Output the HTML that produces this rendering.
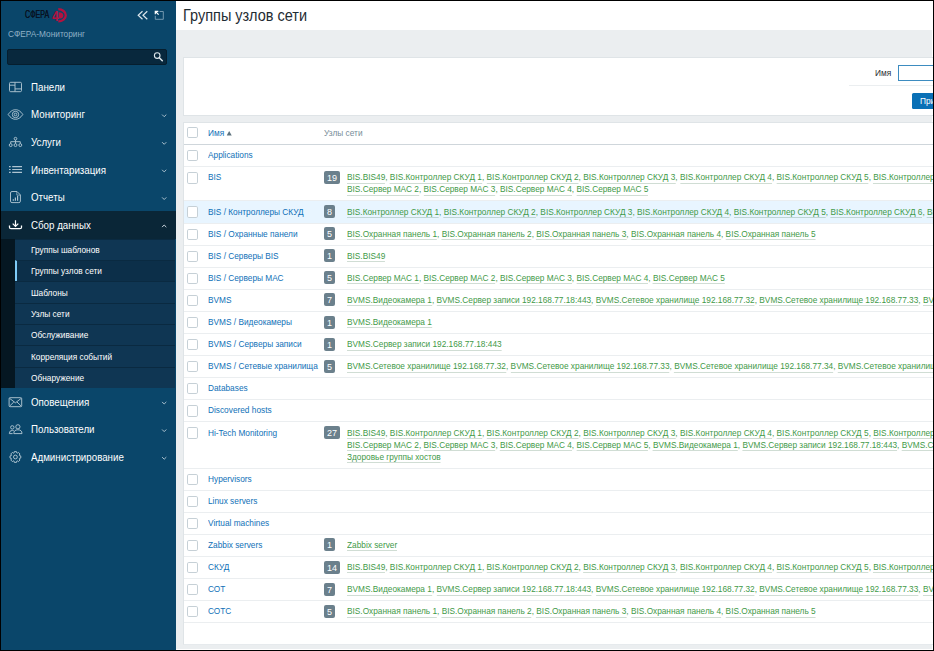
<!DOCTYPE html>
<html lang="ru"><head><meta charset="utf-8"><title>Группы узлов сети</title>
<style>
*{box-sizing:border-box;margin:0;padding:0}
html,body{width:934px;height:651px;overflow:hidden;background:#000;font-family:"Liberation Sans",sans-serif;font-size:8.3px;color:#1f2c33}
#wrap{position:absolute;left:1px;top:1px;width:931.6px;height:648.8px;background:#fff;overflow:hidden}
#bg{position:absolute;left:0;top:0;width:930.8px;height:648.2px;background:#ebeef0}
#side{position:absolute;left:0;top:0;width:174.5px;height:649px;background:#0a466a}
#main{position:absolute;left:174.5px;top:0;right:0;height:649px}
#hdr{position:absolute;left:0;top:0;right:0;height:28.7px;background:#fff}
#hdr h1{transform:scaleX(.926);transform-origin:0 50%;position:absolute;left:7.5px;top:5.5px;font-size:15.66px;line-height:17px;font-weight:normal;color:#1f2c33;white-space:nowrap}
#filter{position:absolute;left:7.5px;top:56.2px;right:0;height:59px;background:#fff;border:1px solid #dfe4e7;border-right:0}
#tbl{position:absolute;left:7.3px;top:121.4px;right:0;height:522.2px;background:#fff;border:1px solid #dfe4e7;border-right:0;border-bottom-color:#e6eaed;overflow:hidden}
.row{position:absolute;left:0;right:0;border-bottom:1px solid #ebeef0}
.row.hd{border-bottom:1px solid #cfd6db;color:#768d99}
.row.hl{background:#e8f5ff}
.cb{position:absolute;left:2.8px;width:11px;height:11.2px;border:1px solid #c6d0d6;border-radius:1.8px;background:#fff}
.nm{transform:scaleX(.926);transform-origin:0 50%;font-size:8.96px;position:absolute;left:23.8px;white-space:nowrap;color:#0f70b7;line-height:12px}
.bd{position:absolute;left:140.2px;height:13px;padding:0 3.05px;border-radius:2px;background:#6b808c;color:#fff;font-size:9px;line-height:14.4px;text-align:center}
.hs{transform:scaleX(.926);transform-origin:0 50%;font-size:8.96px;position:absolute;left:163.5px;white-space:nowrap;color:#4f9a4f;line-height:12px}
a.g{color:#3f9a48;text-decoration:none;border-bottom:1px solid rgba(80,130,95,.27);padding-bottom:.4px}
.sidetx{position:absolute;white-space:nowrap}
.mi{position:absolute;left:0;width:174.5px;height:27.6px;color:#fff;font-size:9.75px}
.mi span{transform:scaleX(.926);transform-origin:0 50%;font-size:10.53px;position:absolute;left:30.4px;top:.6px;line-height:27.6px;white-space:nowrap}
.mi svg.ic{position:absolute;left:7px;top:7.5px;width:13px;height:13px}
.mi svg.ar{position:absolute;left:160px;top:11.5px;width:6px;height:5px}
.sub{position:absolute;left:14.3px;width:160.2px;height:21.33px;background:#0f3653;border-top:1px solid #0a2a41;color:#fff;font-size:8.3px}
.sub span{transform:scaleX(.926);transform-origin:0 50%;font-size:8.96px;position:absolute;left:16.2px;top:.2px;line-height:20.6px;white-space:nowrap}
.sub.sel{background:#0c2f49;border-left:2.5px solid #7ecbf7}
.sub.sel span{left:13.9px}
</style></head><body><div id="wrap"><div id="bg"></div>

<div id="side">
<div class="sidetx" style="left:23.8px;top:8.4px;font-size:10.4px;line-height:12px;color:#071222;text-shadow:0 0 .2px #071222;transform:scaleX(.685);transform-origin:0 50%">СФЕРА</div>
<div class="sidetx" style="left:50.6px;top:5.6px;font-size:15.5px;line-height:18px;font-weight:bold;color:#b3123f;transform:scaleX(.76);transform-origin:0 50%">4</div>
<div class="sidetx" style="left:7.2px;top:26.8px;font-size:8.96px;line-height:12px;color:#8fb0c6;transform:scaleX(.926);transform-origin:0 50%;">СФЕРА-Мониторинг</div>
<div style="position:absolute;left:6.3px;top:48px;width:160.2px;height:15.8px;background:#08283d;border:1px solid #061e2e;border-radius:2px"></div>
<div class="mi" style="top:72.20px"><span>Панели</span></div>
<div class="mi" style="top:99.80px"><span>Мониторинг</span></div>
<div class="mi" style="top:127.40px"><span>Услуги</span></div>
<div class="mi" style="top:155.00px"><span>Инвентаризация</span></div>
<div class="mi" style="top:182.60px"><span>Отчеты</span></div>
<div class="mi" style="top:210.20px;background:#0a2637"><span>Сбор данных</span></div>
<div style="position:absolute;left:0;top:237.80px;width:14.3px;height:149.31px;background:#051722"></div>
<div class="sub" style="top:237.80px"><span>Группы шаблонов</span></div>
<div class="sub sel" style="top:259.13px"><span>Группы узлов сети</span></div>
<div class="sub" style="top:280.46px"><span>Шаблоны</span></div>
<div class="sub" style="top:301.79px"><span>Узлы сети</span></div>
<div class="sub" style="top:323.12px"><span>Обслуживание</span></div>
<div class="sub" style="top:344.45px"><span>Корреляция событий</span></div>
<div class="sub" style="top:365.78px"><span>Обнаружение</span></div>
<div class="mi" style="top:387.11px"><span>Оповещения</span></div>
<div class="mi" style="top:414.71px"><span>Пользователи</span></div>
<div class="mi" style="top:442.31px"><span>Администрирование</span></div>
<svg style="position:absolute;left:-1px;top:-1px" width="176" height="651" viewBox="0 0 176 651"><path d="M58.3 9.2 A7.5 6.1 0 0 1 58.3 21.4" fill="none" stroke="#b3123f" stroke-width="2.3"/><path d="M58.6 12.2 A4.7 3.2 0 0 1 58.6 18.6 Z" fill="#b3123f"/><path d="M142.5 11.3 L138.2 15.3 L142.5 19.3 M147.3 11.3 L143 15.3 L147.3 19.3" fill="none" stroke="#dbe6ec" stroke-width="1.2"/><path d="M159.6 11.5 H163.3 V19.3 H155.3 V15.8" fill="none" stroke="#7fa1b7" stroke-width="0.9"/><path d="M155.3 14.2 V11.3 H158.3 M155.5 11.5 L158.6 14.6" fill="none" stroke="#fff" stroke-width="1.2"/><circle cx="157.2" cy="55.6" r="2.8" fill="none" stroke="#dfe8ee" stroke-width="1.1"/><path d="M159.3 57.8 L162.3 60.8" stroke="#dfe8ee" stroke-width="1.5" stroke-linecap="round"/><rect x="9.5" y="82.3" width="12" height="9.4" rx="1.2" fill="none" stroke="#aec4d1" stroke-width="0.95"/><path d="M15 82.3 V91.7 M9.5 85.2 H15 M15 88.9 H21.5" fill="none" stroke="#aec4d1" stroke-width="0.95"/><path d="M8.2 114.5 C10.6 110.9 13 109.7 15.5 109.7 C18 109.7 20.4 110.9 22.8 114.5 C20.4 118.1 18 119.3 15.5 119.3 C13 119.3 10.6 118.1 8.2 114.5 Z" fill="none" stroke="#aec4d1" stroke-width="0.95"/><circle cx="15.5" cy="114.5" r="3.2" fill="none" stroke="#aec4d1" stroke-width="0.95"/><circle cx="15.5" cy="114.5" r="1.3" fill="none" stroke="#aec4d1" stroke-width="0.95"/><circle cx="15.5" cy="138.7" r="1.35" fill="none" stroke="#aec4d1" stroke-width="0.95"/><path d="M15.5 140.1 V143.6 M10.7 143.6 V141.7 H20.3 V143.6" fill="none" stroke="#aec4d1" stroke-width="0.95"/><circle cx="10.7" cy="145.1" r="1.45" fill="none" stroke="#aec4d1" stroke-width="0.95"/><circle cx="15.5" cy="145.1" r="1.45" fill="none" stroke="#aec4d1" stroke-width="0.95"/><circle cx="20.3" cy="145.1" r="1.45" fill="none" stroke="#aec4d1" stroke-width="0.95"/><path d="M12.2 166.7 H22 M12.2 169.5 H22 M12.2 172.3 H22 M9 166.7 H10.7 M9 169.5 H10.7 M9 172.3 H10.7" fill="none" stroke="#aec4d1" stroke-width="1.2"/><path d="M10.5 193 Q10.5 191.5 12 191.5 H17 L20.4 194.9 V201.1 Q20.4 202.6 18.9 202.6 H12 Q10.5 202.6 10.5 201.1 Z" fill="none" stroke="#aec4d1" stroke-width="0.95"/><path d="M16.8 191.7 V195.1 H20.2" fill="none" stroke="#aec4d1" stroke-width="0.7"/><path d="M13.3 200.8 V199.3 M15.4 200.8 V197.6 M17.6 200.8 V195.8" fill="none" stroke="#aec4d1" stroke-width="1.2"/><path d="M15.5 220.2 V226.2 M12.7 223.6 L15.5 226.4 L18.3 223.6" fill="none" stroke="#fff" stroke-width="1.2"/><path d="M9.5 225.4 V227.2 Q9.5 228.7 11 228.7 H20 Q21.5 228.7 21.5 227.2 V225.4" fill="none" stroke="#fff" stroke-width="1.3"/><rect x="9.1" y="397.7" width="12.6" height="9" rx="1" fill="none" stroke="#aec4d1" stroke-width="0.95"/><path d="M9.5 398.3 L15.4 402.8 L21.3 398.3 M9.5 406.2 L13.8 402 M21.3 406.2 L17 402" fill="none" stroke="#aec4d1" stroke-width="0.95"/><circle cx="17.9" cy="426.8" r="2.1" fill="none" stroke="#aec4d1" stroke-width="0.95"/><path d="M13.8 433.6 Q13.8 429.8 17.9 429.8 Q22 429.8 22 433.6 Z" fill="none" stroke="#aec4d1" stroke-width="0.95"/><circle cx="12.3" cy="427.4" r="1.7" fill="none" stroke="#aec4d1" stroke-width="0.95"/><path d="M12.6 433.6 H9.3 Q9.3 430.4 12.3 430.4 Q13.2 430.4 13.9 430.8" fill="none" stroke="#aec4d1" stroke-width="0.95"/><path d="M20.79 455.91 L20.79 458.09 L19.48 458.35 L19.24 458.93 L19.98 460.04 L18.44 461.58 L17.33 460.84 L16.75 461.08 L16.49 462.39 L14.31 462.39 L14.05 461.08 L13.47 460.84 L12.36 461.58 L10.82 460.04 L11.56 458.93 L11.32 458.35 L10.01 458.09 L10.01 455.91 L11.32 455.65 L11.56 455.07 L10.82 453.96 L12.36 452.42 L13.47 453.16 L14.05 452.92 L14.31 451.61 L16.49 451.61 L16.75 452.92 L17.33 453.16 L18.44 452.42 L19.98 453.96 L19.24 455.07 L19.48 455.65 Z" fill="none" stroke="#aec4d1" stroke-width="0.95" stroke-linejoin="round"/><circle cx="15.4" cy="457.0" r="1.9" fill="none" stroke="#aec4d1" stroke-width="0.95"/><path d="M162.1 114.60 L164.2 116.70 L166.3 114.60" fill="none" stroke="#b4c8d4" stroke-width="0.95"/><path d="M162.1 142.20 L164.2 144.30 L166.3 142.20" fill="none" stroke="#b4c8d4" stroke-width="0.95"/><path d="M162.1 169.80 L164.2 171.90 L166.3 169.80" fill="none" stroke="#b4c8d4" stroke-width="0.95"/><path d="M162.1 197.40 L164.2 199.50 L166.3 197.40" fill="none" stroke="#b4c8d4" stroke-width="0.95"/><path d="M162.1 227.10 L164.2 225.00 L166.3 227.10" fill="none" stroke="#dbe6ec" stroke-width="0.95"/><path d="M162.1 401.91 L164.2 404.01 L166.3 401.91" fill="none" stroke="#b4c8d4" stroke-width="0.95"/><path d="M162.1 429.51 L164.2 431.61 L166.3 429.51" fill="none" stroke="#b4c8d4" stroke-width="0.95"/><path d="M162.1 457.11 L164.2 459.21 L166.3 457.11" fill="none" stroke="#b4c8d4" stroke-width="0.95"/></svg>
</div>
<div id="main"><div id="hdr"><h1>Группы узлов сети</h1></div>
<div id="filter">
<div style="transform:scaleX(.926);transform-origin:0 50%;font-size:8.96px;position:absolute;left:691px;top:8.8px;line-height:12px;color:#1f2c33">Имя</div>
<div style="position:absolute;left:713.6px;top:7.1px;width:60px;height:16.2px;border:1px solid #3d8cc0;background:#fff"></div>
<div style="position:absolute;left:665px;top:27px;right:0;height:1px;background:#ebeef0"></div>
<div style="position:absolute;left:727.8px;top:34.8px;width:60px;height:16.2px;background:#0a70b6;color:#fff;line-height:16.2px;padding-left:8.5px;border-radius:1.5px 0 0 1.5px"><span style="display:inline-block;font-size:8.96px;transform:scaleX(.926);transform-origin:0 50%;">Применить</span></div>
</div>
<div id="tbl">
<div class="row hd" style="top:0;height:21.9px"><div class="cb" style="top:3.6px"></div><div class="nm" style="top:3.6px">Имя <svg width="5.8" height="4.4" viewBox="0 0 5 4" style="vertical-align:0.3px"><path d="M0 4 L2.5 0 L5 4 Z" fill="#5e737e"/></svg></div><div style="transform:scaleX(.926);transform-origin:0 50%;font-size:8.96px;position:absolute;left:140.5px;top:3.6px;line-height:12px;white-space:nowrap">Узлы сети</div></div>
<div class="row" style="top:21.9px;height:22.1px"><div class="cb" style="top:5px"></div><div class="nm" style="top:4.1px">Applications</div></div>
<div class="row" style="top:44.0px;height:34.1px"><div class="cb" style="top:5px"></div><div class="nm" style="top:4.1px">BIS</div><div class="bd" style="top:3.6px">19</div><div class="hs" style="top:4.1px"><a class="g">BIS.BIS49</a>, <a class="g">BIS.Контроллер СКУД 1</a>, <a class="g">BIS.Контроллер СКУД 2</a>, <a class="g">BIS.Контроллер СКУД 3</a>, <a class="g">BIS.Контроллер СКУД 4</a>, <a class="g">BIS.Контроллер СКУД 5</a>, <a class="g">BIS.Контроллер СКУД 6</a>, <a class="g">BIS.Контроллер СКУД 7</a><br><a class="g">BIS.Сервер МАС 2</a>, <a class="g">BIS.Сервер МАС 3</a>, <a class="g">BIS.Сервер МАС 4</a>, <a class="g">BIS.Сервер МАС 5</a></div></div>
<div class="row hl" style="top:78.1px;height:22.1px"><div class="cb" style="top:5px"></div><div class="nm" style="top:4.1px">BIS / Контроллеры СКУД</div><div class="bd" style="top:3.6px">8</div><div class="hs" style="top:4.1px"><a class="g">BIS.Контроллер СКУД 1</a>, <a class="g">BIS.Контроллер СКУД 2</a>, <a class="g">BIS.Контроллер СКУД 3</a>, <a class="g">BIS.Контроллер СКУД 4</a>, <a class="g">BIS.Контроллер СКУД 5</a>, <a class="g">BIS.Контроллер СКУД 6</a>, <a class="g">BIS.Контроллер СКУД 7</a></div></div>
<div class="row" style="top:100.2px;height:22.1px"><div class="cb" style="top:5px"></div><div class="nm" style="top:4.1px">BIS / Охранные панели</div><div class="bd" style="top:3.6px">5</div><div class="hs" style="top:4.1px"><a class="g">BIS.Охранная панель 1</a>, <a class="g">BIS.Охранная панель 2</a>, <a class="g">BIS.Охранная панель 3</a>, <a class="g">BIS.Охранная панель 4</a>, <a class="g">BIS.Охранная панель 5</a></div></div>
<div class="row" style="top:122.3px;height:22.1px"><div class="cb" style="top:5px"></div><div class="nm" style="top:4.1px">BIS / Серверы BIS</div><div class="bd" style="top:3.6px">1</div><div class="hs" style="top:4.1px"><a class="g">BIS.BIS49</a></div></div>
<div class="row" style="top:144.4px;height:22.1px"><div class="cb" style="top:5px"></div><div class="nm" style="top:4.1px">BIS / Серверы МАС</div><div class="bd" style="top:3.6px">5</div><div class="hs" style="top:4.1px"><a class="g">BIS.Сервер МАС 1</a>, <a class="g">BIS.Сервер МАС 2</a>, <a class="g">BIS.Сервер МАС 3</a>, <a class="g">BIS.Сервер МАС 4</a>, <a class="g">BIS.Сервер МАС 5</a></div></div>
<div class="row" style="top:166.5px;height:22.1px"><div class="cb" style="top:5px"></div><div class="nm" style="top:4.1px">BVMS</div><div class="bd" style="top:3.6px">7</div><div class="hs" style="top:4.1px"><a class="g">BVMS.Видеокамера 1</a>, <a class="g">BVMS.Сервер записи 192.168.77.18:443</a>, <a class="g">BVMS.Сетевое хранилище 192.168.77.32</a>, <a class="g">BVMS.Сетевое хранилище 192.168.77.33</a>, <a class="g">BVMS.Сетевое хранилище 192.168.77.34</a></div></div>
<div class="row" style="top:188.6px;height:22.1px"><div class="cb" style="top:5px"></div><div class="nm" style="top:4.1px">BVMS / Видеокамеры</div><div class="bd" style="top:3.6px">1</div><div class="hs" style="top:4.1px"><a class="g">BVMS.Видеокамера 1</a></div></div>
<div class="row" style="top:210.7px;height:22.1px"><div class="cb" style="top:5px"></div><div class="nm" style="top:4.1px">BVMS / Серверы записи</div><div class="bd" style="top:3.6px">1</div><div class="hs" style="top:4.1px"><a class="g">BVMS.Сервер записи 192.168.77.18:443</a></div></div>
<div class="row" style="top:232.8px;height:22.1px"><div class="cb" style="top:5px"></div><div class="nm" style="top:4.1px">BVMS / Сетевые хранилища</div><div class="bd" style="top:3.6px">5</div><div class="hs" style="top:4.1px"><a class="g">BVMS.Сетевое хранилище 192.168.77.32</a>, <a class="g">BVMS.Сетевое хранилище 192.168.77.33</a>, <a class="g">BVMS.Сетевое хранилище 192.168.77.34</a>, <a class="g">BVMS.Сетевое хранилище 192.168.77.35</a></div></div>
<div class="row" style="top:254.9px;height:22.1px"><div class="cb" style="top:5px"></div><div class="nm" style="top:4.1px">Databases</div></div>
<div class="row" style="top:277.0px;height:22.1px"><div class="cb" style="top:5px"></div><div class="nm" style="top:4.1px">Discovered hosts</div></div>
<div class="row" style="top:299.1px;height:46.1px"><div class="cb" style="top:5px"></div><div class="nm" style="top:4.1px">Hi-Tech Monitoring</div><div class="bd" style="top:3.6px">27</div><div class="hs" style="top:4.1px"><a class="g">BIS.BIS49</a>, <a class="g">BIS.Контроллер СКУД 1</a>, <a class="g">BIS.Контроллер СКУД 2</a>, <a class="g">BIS.Контроллер СКУД 3</a>, <a class="g">BIS.Контроллер СКУД 4</a>, <a class="g">BIS.Контроллер СКУД 5</a>, <a class="g">BIS.Контроллер СКУД 6</a>, <a class="g">BIS.Контроллер СКУД 7</a><br><a class="g">BIS.Сервер МАС 2</a>, <a class="g">BIS.Сервер МАС 3</a>, <a class="g">BIS.Сервер МАС 4</a>, <a class="g">BIS.Сервер МАС 5</a>, <a class="g">BVMS.Видеокамера 1</a>, <a class="g">BVMS.Сервер записи 192.168.77.18:443</a>, <a class="g">BVMS.Сетевое хранилище 192.168.77.32</a><br><a class="g">Здоровье группы хостов</a></div></div>
<div class="row" style="top:345.2px;height:22.1px"><div class="cb" style="top:5px"></div><div class="nm" style="top:4.1px">Hypervisors</div></div>
<div class="row" style="top:367.3px;height:22.1px"><div class="cb" style="top:5px"></div><div class="nm" style="top:4.1px">Linux servers</div></div>
<div class="row" style="top:389.4px;height:22.1px"><div class="cb" style="top:5px"></div><div class="nm" style="top:4.1px">Virtual machines</div></div>
<div class="row" style="top:411.5px;height:22.1px"><div class="cb" style="top:5px"></div><div class="nm" style="top:4.1px">Zabbix servers</div><div class="bd" style="top:3.6px">1</div><div class="hs" style="top:4.1px"><a class="g">Zabbix server</a></div></div>
<div class="row" style="top:433.6px;height:22.1px"><div class="cb" style="top:5px"></div><div class="nm" style="top:4.1px">СКУД</div><div class="bd" style="top:3.6px">14</div><div class="hs" style="top:4.1px"><a class="g">BIS.BIS49</a>, <a class="g">BIS.Контроллер СКУД 1</a>, <a class="g">BIS.Контроллер СКУД 2</a>, <a class="g">BIS.Контроллер СКУД 3</a>, <a class="g">BIS.Контроллер СКУД 4</a>, <a class="g">BIS.Контроллер СКУД 5</a>, <a class="g">BIS.Контроллер СКУД 6</a>, <a class="g">BIS.Контроллер СКУД 7</a></div></div>
<div class="row" style="top:455.7px;height:22.1px"><div class="cb" style="top:5px"></div><div class="nm" style="top:4.1px">СОТ</div><div class="bd" style="top:3.6px">7</div><div class="hs" style="top:4.1px"><a class="g">BVMS.Видеокамера 1</a>, <a class="g">BVMS.Сервер записи 192.168.77.18:443</a>, <a class="g">BVMS.Сетевое хранилище 192.168.77.32</a>, <a class="g">BVMS.Сетевое хранилище 192.168.77.33</a>, <a class="g">BVMS.Сетевое хранилище 192.168.77.34</a></div></div>
<div class="row" style="top:477.8px;height:22.1px"><div class="cb" style="top:5px"></div><div class="nm" style="top:4.1px">СОТС</div><div class="bd" style="top:3.6px">5</div><div class="hs" style="top:4.1px"><a class="g">BIS.Охранная панель 1</a>, <a class="g">BIS.Охранная панель 2</a>, <a class="g">BIS.Охранная панель 3</a>, <a class="g">BIS.Охранная панель 4</a>, <a class="g">BIS.Охранная панель 5</a></div></div>
</div></div>
</div></body></html>
